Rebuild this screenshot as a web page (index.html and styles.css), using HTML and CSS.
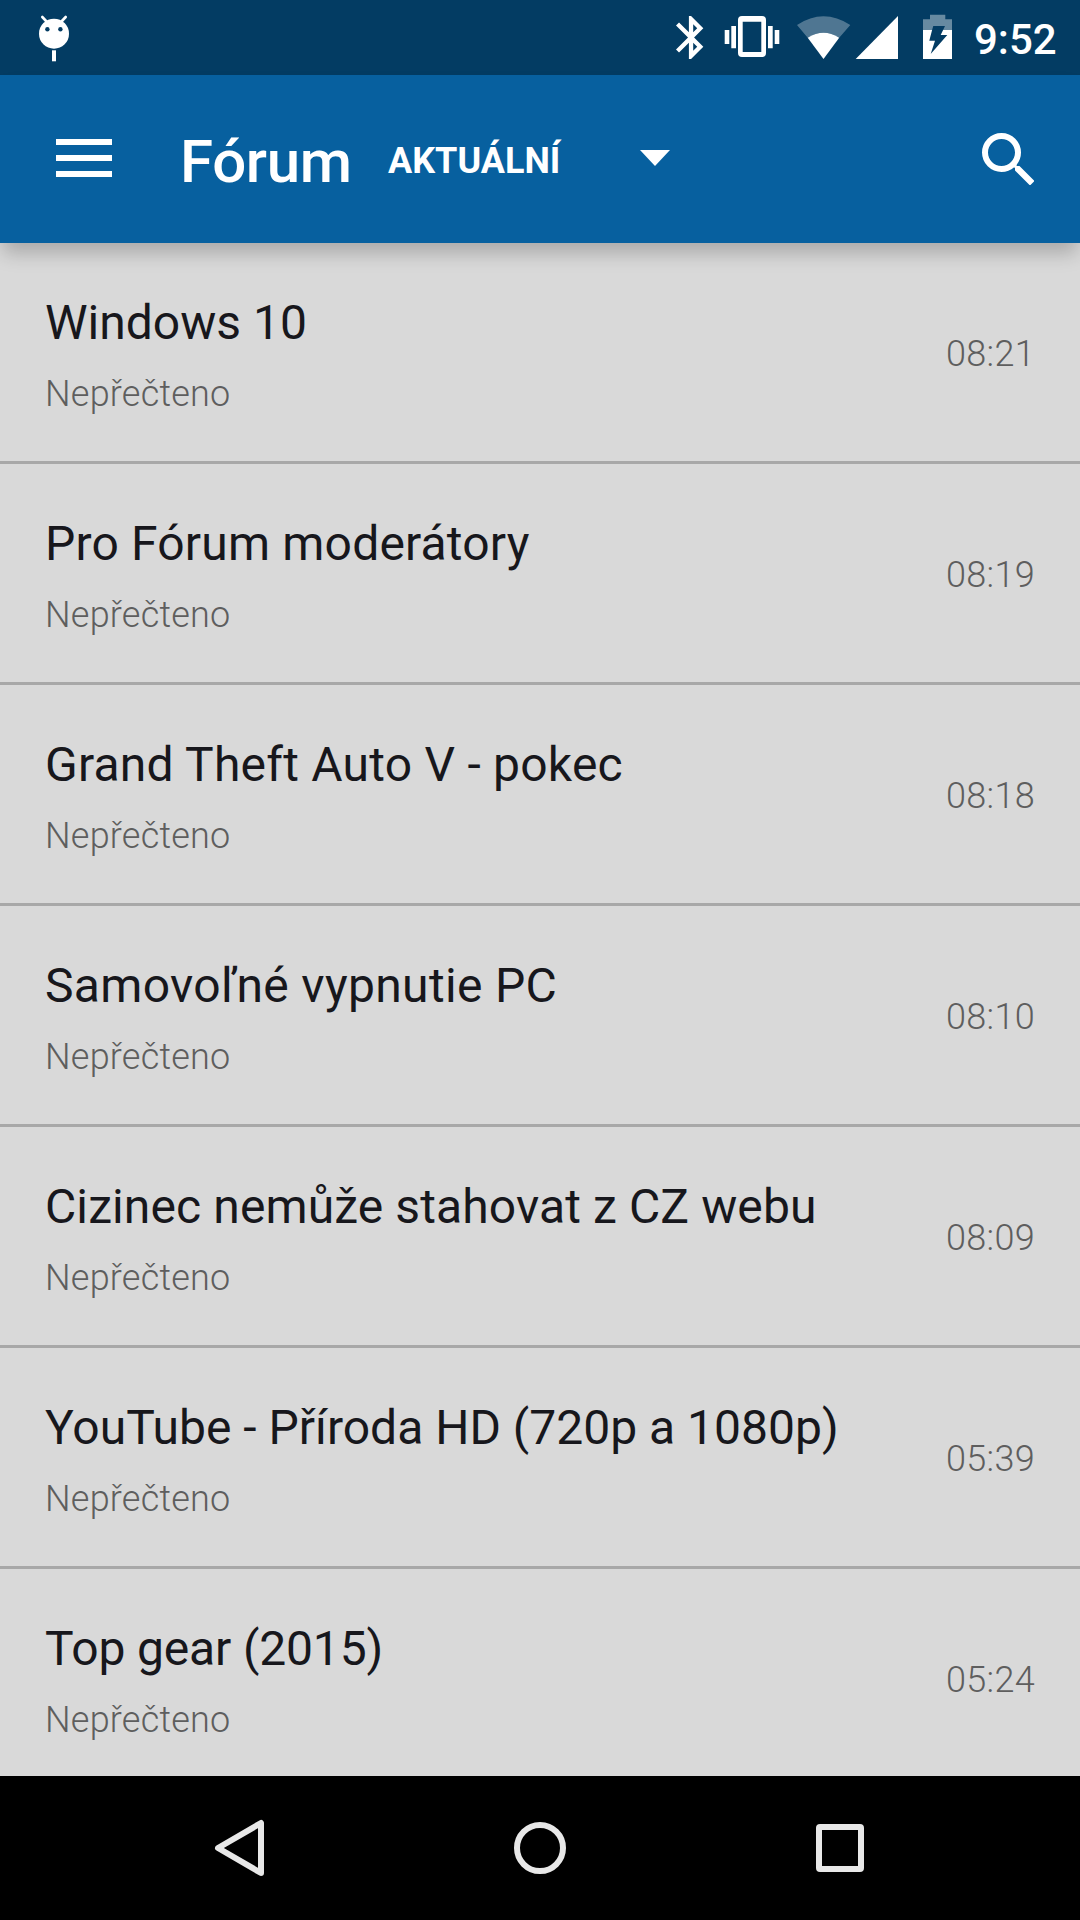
FILE: index.html
```html
<!DOCTYPE html>
<html lang="cs">
<head>
<meta charset="utf-8">
<title>Fórum</title>
<link rel="stylesheet" href="styles.css">
</head>
<body>
<div class="screen">
  <header class="status">
    <svg class="droid" width="32" height="49" viewBox="0 0 32 49"><path d="M4.300 4L9 9M27.700 4L23 9" stroke="#fff" stroke-width="2.600" stroke-linecap="round"/><circle cx="16" cy="20.700" r="15" fill="#fff"/><circle cx="9.400" cy="16.300" r="2.200" fill="#033c63"/><circle cx="22.400" cy="16.300" r="2.200" fill="#033c63"/><path d="M16 37.300v11" stroke="#fff" stroke-width="4"/></svg>
    <svg class="indicators" width="276" height="51" viewBox="0 0 276 51" fill="#fff">
      <path transform="translate(-10.75 -.3) scale(2.15)" d="M17.710 7.710L12 2h-1v7.590L6.410 5 5 6.410 10.590 12 5 17.590 6.410 19 11 14.410V22h1l5.710-5.710-4.300-4.290 4.300-4.290zM13 5.830l1.880 1.880L13 9.590V5.830zm1.880 10.460L13 18.170v-3.760l1.880 1.880z"/>
      <path fill-rule="evenodd" d="M66 4h20a4 4 0 0 1 4 4v33a4 4 0 0 1-4 4H66a4 4 0 0 1-4-4V8a4 4 0 0 1 4-4zM66.700 9.700V40h18.600V9.700zM55.300 14H60v22.300h-4.700zM48.700 18h4.600v14h-4.600zM92 14h4.700v22.300H92zM98.700 18h4.600v14h-4.600z"/>
      <path d="M121 13Q147.500-4.400 174.300 13L163.200 25.700Q147.500 15.700 131.700 25.700z" opacity=".3"/>
      <path d="M131.700 25.700Q147.500 15.700 163.200 25.700L147.500 47z"/>
      <path d="M222 4v43h-42.300z"/>
      <path opacity=".4" d="M247 7.300h7V2.700h15.300v4.600H276V18h-8.900l1.900-4h-11.700l-1.200 4H247z"/>
      <path fill-rule="evenodd" d="M247 18h9.100l-2.800 10.700h5.700L254.700 42l16.600-19h-6.600l2.400-5h8.900v29h-29z"/>
    </svg>
    <span class="clock">9:52</span>
  </header>
  <nav class="toolbar">
    <svg class="menu" width="56" height="40" viewBox="0 0 56 40"><path d="M0 3h56M0 19h56M0 35h56" stroke="#fff" stroke-width="6"/></svg>
    <h1 class="title">Fórum</h1>
    <span class="filter">AKTUÁLNÍ</span>
    <svg class="arrow" width="30" height="16" viewBox="0 0 30 16"><path d="M0 0h30L15 16z" fill="#fff"/></svg>
    <svg class="search" width="52.5" height="52.5" viewBox="3 3 17.5 17.5"><path fill="#fff" d="M15.500 14h-.79l-.28-.27A6.470 6.470 0 0 0 16 9.500 6.500 6.500 0 1 0 9.500 16c1.610 0 3.090-.59 4.230-1.570l.27.28v.79l5 4.990L20.490 19l-4.990-5zm-6 0C7.010 14 5 11.990 5 9.500S7.010 5 9.500 5 14 7.010 14 9.500 11.990 14 9.500 14z"/></svg>
  </nav>
  <main class="list">
    <article class="row"><div><h2>Windows 10</h2><p>Nepřečteno</p></div><time>08:21</time></article>
    <article class="row"><div><h2>Pro Fórum moderátory</h2><p>Nepřečteno</p></div><time>08:19</time></article>
    <article class="row"><div><h2>Grand Theft Auto V - pokec</h2><p>Nepřečteno</p></div><time>08:18</time></article>
    <article class="row"><div><h2>Samovoľné vypnutie PC</h2><p>Nepřečteno</p></div><time>08:10</time></article>
    <article class="row"><div><h2>Cizinec nemůže stahovat z CZ webu</h2><p>Nepřečteno</p></div><time>08:09</time></article>
    <article class="row"><div><h2>YouTube - Příroda HD (720p a 1080p)</h2><p>Nepřečteno</p></div><time>05:39</time></article>
    <article class="row"><div><h2>Top gear (2015)</h2><p>Nepřečteno</p></div><time>05:24</time></article>
  </main>
  <footer class="navbar">
    <svg width="60" height="60" viewBox="0 0 60 60"><path d="M51 5v50L8 30z"/></svg>
    <svg width="60" height="60" viewBox="0 0 60 60"><circle cx="30" cy="30" r="23"/></svg>
    <svg width="60" height="60" viewBox="0 0 60 60"><rect x="9" y="9" width="42" height="42" rx="1"/></svg>
  </footer>
</div>
</body>
</html>
```
FILE: styles.css
```css
* { box-sizing: border-box; }
body { margin: 0; font-family: Roboto, sans-serif; }
h1, h2, p { margin: 0; }
svg { display: block; flex: none; }
.screen { width: 1080px; height: 1920px; display: flex; flex-direction: column; overflow: hidden; background: #d9d9d9; }
.status { height: 75px; flex: none; display: flex; align-items: center; background: #033c63; color: #fff; padding: 0 24px 0 38px; }
.indicators { margin-left: auto; }
.clock { width: 82px; font-size: 42px; font-weight: 500; line-height: 50px; text-align: right; white-space: nowrap; margin-left: 22px; margin-top: 4px; }
.toolbar { height: 168px; flex: none; display: flex; align-items: center; background: #07609f; color: #fff; padding: 0 46px 0 56px; box-shadow: 0 13px 18px -3px rgba(0,0,0,.22); }
.title { width: 170px; font-size: 60px; font-weight: 500; letter-spacing: -.3px; margin-left: 68px; margin-top: 4px; }
.filter { width: 172px; font-size: 36px; font-weight: 700; white-space: nowrap; margin-left: 38px; margin-top: 4px; }
.arrow { margin-left: 80px; margin-bottom: 2px; }
.search { margin-left: auto; }
.list { flex: 1; min-height: 0; overflow: hidden; }
.row { height: 221px; display: flex; align-items: center; justify-content: space-between; padding: 4px 45px 0; border-bottom: 3px solid #a8a8a8; }
.row h2 { font-size: 48px; font-weight: 400; line-height: 56px; margin-top: 2px; color: #17171c; }
.row p { font-size: 36px; font-weight: 300; line-height: 42px; letter-spacing: .22px; margin-top: 22px; color: #5e5e5e; }
.row time { font-size: 36px; font-weight: 300; letter-spacing: .3px; color: #5e5e5e; }
.row:nth-child(2) h2 { letter-spacing: .18px; }
.row:nth-child(3) h2 { letter-spacing: .23px; }
.row:nth-child(4) h2 { letter-spacing: .33px; }
.row:nth-child(5) h2 { letter-spacing: .11px; }
.row:nth-child(7) h2 { letter-spacing: -.15px; }
.navbar { height: 144px; flex: none; display: flex; align-items: center; justify-content: space-between; padding: 0 210px; background: #000; }
.navbar svg { fill: none; stroke: #e8e8e8; stroke-width: 6; stroke-linejoin: round; }
```
